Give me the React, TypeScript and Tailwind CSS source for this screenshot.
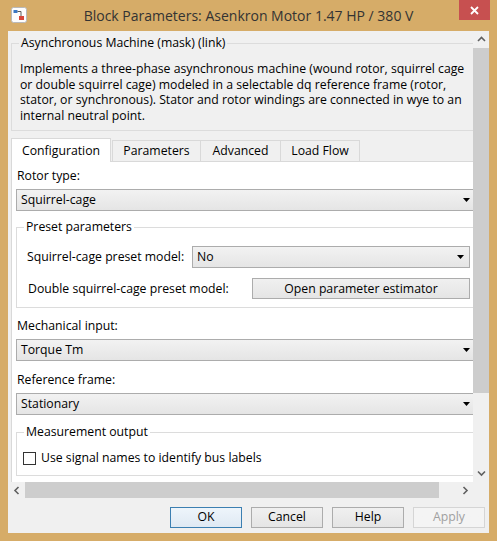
import React from "react";

type Kids = { children?: React.ReactNode; className?: string };

function DropArrow() {
  return (
    <svg width="7" height="4" viewBox="0 0 7 4">
      <path d="M0 0h7L3.5 4z" fill="#000" />
    </svg>
  );
}

function Chevron({ dir }: { dir: "up" | "down" | "left" | "right" }) {
  const d = {
    up: "M1 5L4.5 1.5L8 5",
    down: "M1 1.5L4.5 5L8 1.5",
    left: "M5.5 1L2 4.5L5.5 8",
    right: "M2.5 1L6 4.5L2.5 8",
  }[dir];
  const vertical = dir === "up" || dir === "down";
  return (
    <svg width={vertical ? 9 : 8} height={vertical ? 7 : 9} viewBox={vertical ? "0 0 9 7" : "0 0 8 9"}>
      <path d={d} fill="none" stroke="#606060" strokeWidth="1.6" />
    </svg>
  );
}

function Dropdown({ value, className = "" }: { value: string; className?: string }) {
  return (
    <div
      className={`flex h-[22px] items-center justify-between border border-[#acacac] bg-gradient-to-b from-[#f2f2f2] to-[#e5e5e5] pl-[4px] pr-[5px] ${className}`}
    >
      <span>{value}</span>
      <DropArrow />
    </div>
  );
}

function DlgButton({ children, kind = "normal" }: Kids & { kind?: "normal" | "default" | "disabled" }) {
  const look =
    kind === "default"
      ? "border-[#3c7fb1] from-[#eef5fb] to-[#dfe9f3] text-black"
      : kind === "disabled"
        ? "border-[#d5d5d5] from-[#f4f4f4] to-[#f4f4f4] text-[#a0a0a0]"
        : "border-[#acacac] from-[#f0f0f0] to-[#e5e5e5] text-black";
  return (
    <div className={`flex h-[21px] w-[72px] items-center justify-center border bg-gradient-to-b ${look}`}>
      {children}
    </div>
  );
}

function DlgButtonWide({ children }: Kids) {
  return (
    <div className="flex h-[21px] flex-1 items-center justify-center border border-[#acacac] bg-gradient-to-b from-[#f0f0f0] to-[#e5e5e5]">
      {children}
    </div>
  );
}

function Tab({ children, active = false, className = "" }: Kids & { active?: boolean }) {
  return active ? (
    <div
      className={`relative z-10 -mb-px flex h-[24px] items-center justify-center border border-b-0 border-[#d9d9d9] bg-white ${className}`}
    >
      {children}
    </div>
  ) : (
    <div
      className={`flex h-[21px] items-center justify-center border border-b-0 border-[#d9d9d9] bg-[#f0f0f0] ${className}`}
    >
      {children}
    </div>
  );
}

function AppIcon() {
  return (
    <svg width="16" height="16" viewBox="0 0 16 16">
      <rect x="0.5" y="0.5" width="15" height="15" rx="2" fill="#fdfdfd" stroke="#b9b9b9" />
      <rect x="2.5" y="3" width="4" height="3" fill="#3a78c4" />
      <path d="M6.5 4.5H10V9" fill="none" stroke="#5a5a5a" strokeWidth="1" />
      <rect x="8" y="9" width="5" height="4" fill="#d8473a" />
    </svg>
  );
}

export default function App() {
  return (
    <div className="flex h-[541px] w-[497px] flex-col bg-[#d6ac68] font-['Open_Sans','Noto_Sans',sans-serif] text-[12.25px] text-black">
      {/* title bar */}
      <div className="grid h-[31px] grid-cols-[38px_1fr_38px]">
        <div className="pl-[11px] pt-[7px]">
          <AppIcon />
        </div>
        <div className="flex items-center justify-center pb-px text-[14px] text-[#333]">
          Block Parameters: Asenkron Motor 1.47 HP / 380 V
        </div>
        <div className="flex justify-end pr-[7px]">
          <div className="flex h-[20px] w-[31px] items-center justify-center bg-[#c75050]">
            <svg width="9" height="9" viewBox="0 0 9 9">
              <path d="M1 1L8 8M8 1L1 8" stroke="#fff" strokeWidth="1.8" />
            </svg>
          </div>
        </div>
      </div>

      {/* client */}
      <div className="mx-[8px] mb-[8px] flex flex-1 flex-col bg-[#f0f0f0]">
        <div className="flex h-[451px]">
          <div className="w-[465px] overflow-hidden">
            <fieldset className="ml-[3px] mt-[4px] w-[470px] border border-[#dcdcdc] p-0">
              <legend className="ml-[7px] px-[2px] leading-[16px]">Asynchronous Machine (mask) (link)</legend>
              <div className="whitespace-nowrap pb-[7px] pl-[8px] pt-[10px] leading-[15.6px]">
                <div>Implements a three-phase asynchronous machine (wound rotor, squirrel cage</div>
                <div>or double squirrel cage) modeled in a selectable dq reference frame (rotor,</div>
                <div>stator, or synchronous). Stator and rotor windings are connected in wye to an</div>
                <div>internal neutral point.</div>
              </div>
            </fieldset>

            <div className="ml-[3px] mt-[7px] flex items-end">
              <Tab active className="w-[100px]">
                Configuration
              </Tab>
              <Tab className="ml-px w-[89px]">Parameters</Tab>
              <Tab className="-ml-px w-[81px]">Advanced</Tab>
              <Tab className="-ml-px w-[80px]">Load Flow</Tab>
            </div>

            <div className="ml-[3px] w-[470px] border border-[#d9d9d9] bg-white pb-[40px] pl-[4px] pr-[4px]">
              <div className="mt-[6px] h-[16px] pl-px leading-[16px]">Rotor type:</div>
              <Dropdown value="Squirrel-cage" className="mt-[5px]" />

              <fieldset className="mt-[8px] border border-[#dcdcdc] p-0">
                <legend className="ml-[7px] px-[2px] leading-[16px]">Preset parameters</legend>
                <div className="pb-[8px] pl-[9px] pr-[5px]">
                  <div className="mt-[11px] flex h-[21px] items-center">
                    <div className="w-[166px] whitespace-nowrap pl-px">Squirrel-cage preset model:</div>
                    <Dropdown value="No" className="h-[21px] flex-1" />
                  </div>
                  <div className="mt-[11px] flex h-[21px] items-center">
                    <div className="w-[226px] whitespace-nowrap pl-[2px]">Double squirrel-cage preset model:</div>
                    <DlgButtonWide>Open parameter estimator</DlgButtonWide>
                  </div>
                </div>
              </fieldset>

              <div className="mt-[10px] h-[16px] pl-px leading-[16px]">Mechanical input:</div>
              <Dropdown value="Torque Tm" className="mt-[5px]" />
              <div className="mt-[11px] h-[16px] pl-px leading-[16px]">Reference frame:</div>
              <Dropdown value="Stationary" className="mt-[5px]" />

              <fieldset className="mt-[9px] border border-[#dcdcdc] p-0">
                <legend className="ml-[7px] px-[2px] leading-[16px]">Measurement output</legend>
                <div className="pb-[9px] pl-[6px]">
                  <div className="mt-[10px] flex h-[16px] items-center gap-[5px]">
                    <div className="h-[13px] w-[13px] border border-[#333] bg-white" />
                    <span>Use signal names to identify bus labels</span>
                  </div>
                </div>
              </fieldset>
            </div>
          </div>

          {/* vertical scrollbar */}
          <div className="flex w-[16px] flex-col bg-[#f0f0f0]">
            <div className="flex h-[17px] items-center justify-center">
              <Chevron dir="up" />
            </div>
            <div className="h-[345px] bg-[#cdcdcd]" />
            <div className="flex-1" />
            <div className="flex h-[17px] items-center justify-center">
              <Chevron dir="down" />
            </div>
          </div>
        </div>

        {/* horizontal scrollbar */}
        <div className="flex h-[16px]">
          <div className="flex w-[465px] bg-[#f0f0f0]">
            <div className="flex w-[17px] items-center justify-center">
              <Chevron dir="left" />
            </div>
            <div className="w-[414px] bg-[#cdcdcd]" />
            <div className="flex-1" />
            <div className="flex w-[17px] items-center justify-center">
              <Chevron dir="right" />
            </div>
          </div>
          <div className="w-[16px] bg-[#f0f0f0]" />
        </div>

        {/* buttons */}
        <div className="flex justify-end gap-[9px] pr-[4px] pt-[9px]">
          <DlgButton kind="default">OK</DlgButton>
          <DlgButton>Cancel</DlgButton>
          <DlgButton>Help</DlgButton>
          <DlgButton kind="disabled">Apply</DlgButton>
        </div>
      </div>
    </div>
  );
}
